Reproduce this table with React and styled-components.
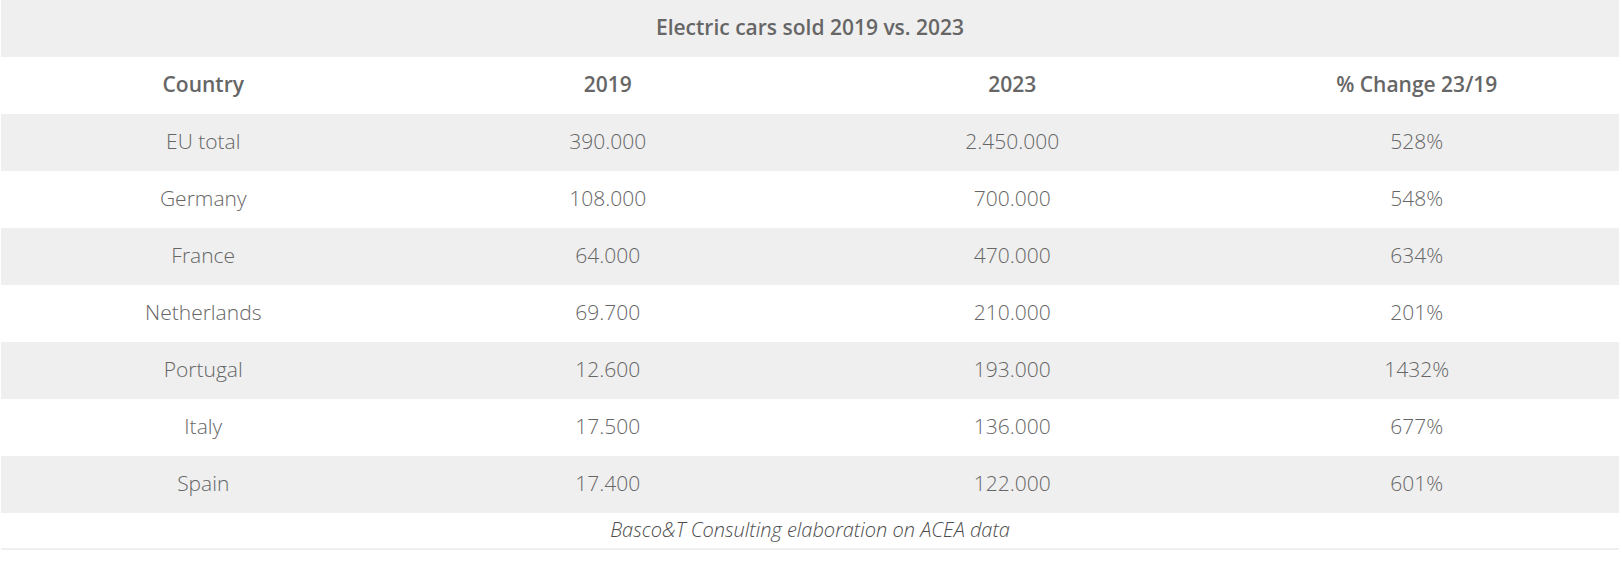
import React from 'react';
import styled, { createGlobalStyle } from 'styled-components';

const GlobalStyle = createGlobalStyle`
    body {
        margin: 0;
        background: #fff;
        font-family: "Open Sans", "Liberation Sans", sans-serif;
    }
`;

const Wrapper = styled.div`
    width: 1618px;
    padding-left: 1px;
`;

const Table = styled.table`
    width: 100%;
    border-collapse: collapse;
    table-layout: fixed;
    color: #666;
    font-size: 21px;
`;

const Tr = styled.tr`
    height: 57px;
    background: ${(p) => (p.$shade ? '#efefef' : '#fff')};
`;

const TitleCell = styled.th`
    font-weight: 600;
    text-align: center;
    padding: 0 0 3px;
`;

const Th = styled.th`
    font-weight: 600;
    text-align: center;
    padding: 0 0 3px;
`;

const Td = styled.td`
    font-weight: 300;
    text-align: center;
    padding: 0 0 3px;
`;

const Caption = styled.div`
    height: 35px;
    line-height: 33px;
    text-align: center;
    font-style: italic;
    font-weight: 300;
    font-size: 20px;
    color: #4d4d4d;
    border-bottom: 2px solid #efefef;
`;

const columns = ['Country', '2019', '2023', '% Change 23/19'];

const data = [
    { country: 'EU total', y2019: '390.000', y2023: '2.450.000', change: '528%' },
    { country: 'Germany', y2019: '108.000', y2023: '700.000', change: '548%' },
    { country: 'France', y2019: '64.000', y2023: '470.000', change: '634%' },
    { country: 'Netherlands', y2019: '69.700', y2023: '210.000', change: '201%' },
    { country: 'Portugal', y2019: '12.600', y2023: '193.000', change: '1432%' },
    { country: 'Italy', y2019: '17.500', y2023: '136.000', change: '677%' },
    { country: 'Spain', y2019: '17.400', y2023: '122.000', change: '601%' },
];

const App = () => {
    return (
        <Wrapper>
            <GlobalStyle />
            <Table>
                <thead>
                    <Tr $shade>
                        <TitleCell colSpan={4}>Electric cars sold 2019 vs. 2023</TitleCell>
                    </Tr>
                    <Tr>
                        {columns.map((column, idx) => (
                            <Th key={idx}>{column}</Th>
                        ))}
                    </Tr>
                </thead>
                <tbody>
                    {data.map(({ country, y2019, y2023, change }, idx) => (
                        <Tr key={country} $shade={idx % 2 === 0}>
                            <Td>{country}</Td>
                            <Td>{y2019}</Td>
                            <Td>{y2023}</Td>
                            <Td>{change}</Td>
                        </Tr>
                    ))}
                </tbody>
            </Table>
            <Caption>Basco&amp;T Consulting elaboration on ACEA data</Caption>
        </Wrapper>
    );
};

export default App;
